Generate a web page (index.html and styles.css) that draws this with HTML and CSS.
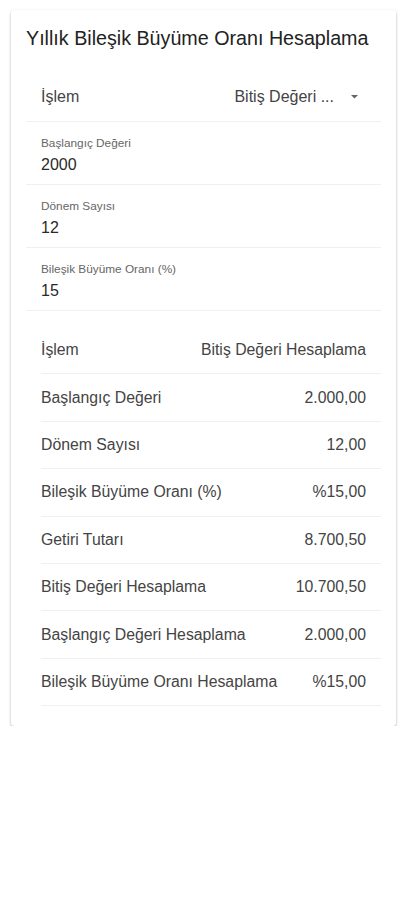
FILE: index.html
```html
<!DOCTYPE html>
<html lang="tr">
<head>
    <meta charset="UTF-8">
    <meta name="viewport" content="width=device-width, initial-scale=1.0">
    <title>Yıllık Bileşik Büyüme Oranı Hesaplama</title>
    <link rel="stylesheet" href="styles.css">
</head>
<body>

    <div class="card">
        <h2 class="card-title">Yıllık Bileşik Büyüme Oranı Hesaplama</h2>

        <!-- Form -->
        <div class="form">
            <div class="select-row">
                <span class="select-label">İşlem</span>
                <span class="select-value">Bitiş Değeri ...</span>
                <svg class="select-arrow" width="7" height="4" viewBox="0 0 7 4">
                    <path d="M0 0h7l-3.5 3.5z" fill="#666"/>
                </svg>
            </div>

            <div class="field">
                <div class="field-label">Başlangıç Değeri</div>
                <div class="field-value">2000</div>
            </div>
            <div class="field">
                <div class="field-label">Dönem Sayısı</div>
                <div class="field-value">12</div>
            </div>
            <div class="field">
                <div class="field-label">Bileşik Büyüme Oranı (%)</div>
                <div class="field-value">15</div>
            </div>
        </div>

        <!-- Results -->
        <div class="results">
            <div class="result-row"><span>İşlem</span><span>Bitiş Değeri Hesaplama</span></div>
            <div class="result-row"><span>Başlangıç Değeri</span><span>2.000,00</span></div>
            <div class="result-row"><span>Dönem Sayısı</span><span>12,00</span></div>
            <div class="result-row"><span>Bileşik Büyüme Oranı (%)</span><span>%15,00</span></div>
            <div class="result-row"><span>Getiri Tutarı</span><span>8.700,50</span></div>
            <div class="result-row"><span>Bitiş Değeri Hesaplama</span><span>10.700,50</span></div>
            <div class="result-row"><span>Başlangıç Değeri Hesaplama</span><span>2.000,00</span></div>
            <div class="result-row"><span>Bileşik Büyüme Oranı Hesaplama</span><span>%15,00</span></div>
        </div>
    </div>

</body>
</html>
```

FILE: styles.css
```css
body {
    font-family: 'Liberation Sans', Arial, sans-serif;
    margin: 0;
    padding: 0;
    background-color: white;
}

.card {
    margin: 10px 10px 0 11px;
    padding: 16px 15px 20px;
    background-color: white;
    border-radius: 3px;
    box-shadow: 0 2px 3px rgba(0, 0, 0, 0.25), 0 0 2px rgba(0, 0, 0, 0.08);
}

.card-title {
    margin: 0;
    font-size: 19.7px;
    font-weight: normal;
    line-height: 24px;
    color: #222;
}

.form {
    margin-top: 23px;
}

.select-row {
    display: flex;
    align-items: center;
    height: 48px;
    padding: 0 15px;
    border-bottom: 1px solid #f0f0f0;
    font-size: 16px;
    color: #444;
}

.select-label {
    flex: 1;
}

.select-value {
    margin-right: 17px;
}

.select-arrow {
    margin-right: 8px;
}

.field {
    box-sizing: border-box;
    height: 63px;
    padding: 14px 15px 0;
    border-bottom: 1px solid #f0f0f0;
}

.field-label {
    font-size: 11.8px;
    line-height: 14px;
    color: #666;
}

.field-value {
    margin-top: 5px;
    font-size: 16px;
    line-height: 20px;
    color: #2a2a2a;
}

.results {
    margin-top: 16px;
}

.result-row {
    box-sizing: border-box;
    height: 47.4px;
    margin-left: 15px;
    padding-right: 15px;
    display: flex;
    justify-content: space-between;
    align-items: center;
    border-bottom: 1px solid #f0f0f0;
    font-size: 15.8px;
    color: #444;
}
```
